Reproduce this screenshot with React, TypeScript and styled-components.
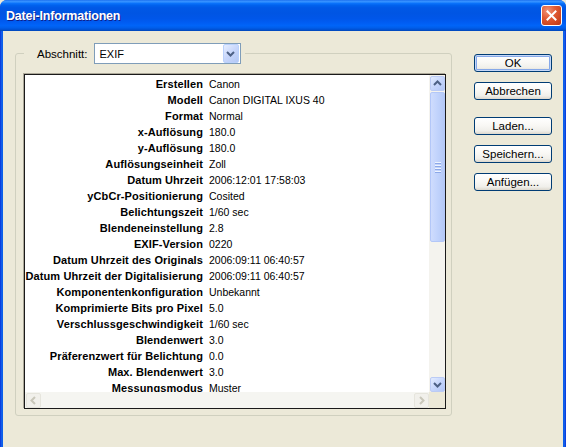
import React from 'react';
import styled, { createGlobalStyle } from 'styled-components';

const GlobalStyle = createGlobalStyle`
  html, body {
    margin: 0;
    padding: 0;
    background: #ECE9D8;
  }
  body {
    font-family: "Liberation Sans", Arial, sans-serif;
    font-size: 11px;
    color: #000;
  }
`;

const Window = styled.div`
  width: 566px;
  height: 447px;
  display: flex;
  flex-direction: column;
  background: linear-gradient(90deg, #0831D9 0px, #166AEE 2px, #0055E5 3px, #0055E5 563px, #166AEE 564px, #0831D9 566px);
  border-radius: 7px 7px 0 0;
  overflow: hidden;
`;

const TitleBar = styled.div`
  height: 31px;
  flex: none;
  display: flex;
  align-items: center;
  justify-content: space-between;
  padding: 0 4px 0 6px;
  background: linear-gradient(180deg, #0A5FE8 0%, #3D95FF 3%, #2A8BFF 7%, #0A72FA 11%, #0062EE 17%, #0058E6 25%, #0055E3 42%, #0056E9 60%, #005CF2 72%, #0064F8 82%, #0060EE 88%, #0055DC 94%, #0046B8 100%);
`;

const Title = styled.span`
  color: #fff;
  font-family: "Liberation Sans", Arial, sans-serif;
  font-weight: bold;
  font-size: 12.5px;
  letter-spacing: -0.2px;
  text-shadow: 1px 1px #0f1f8a;
  margin-top: 1px;
`;

const CloseButton = styled.div`
  width: 21px;
  height: 21px;
  box-sizing: border-box;
  border: 1px solid #fff;
  border-radius: 3px;
  background: radial-gradient(circle at 30% 25%, #F0957A 0%, #E15B34 40%, #CC4520 75%, #B5361A 100%);
  display: flex;
  align-items: center;
  justify-content: center;
`;

const Body = styled.div`
  flex: 1;
  margin: 0 3px;
  background: #ECE9D8;
  display: flex;
  align-items: flex-start;
  padding: 12px 0 0 12px;
`;

const Group = styled.fieldset`
  margin: 0;
  width: 437px;
  box-sizing: border-box;
  border: 1px solid #D0D0BF;
  border-radius: 3px;
  padding: 10px 5px 6px 8px;
`;

const Legend = styled.legend`
  padding: 0 4px 0 13px;
  display: flex;
  align-items: center;
  gap: 6px;
`;

const FieldLabel = styled.span`
  font-size: 11.5px;
`;

const Combo = styled.div`
  width: 147px;
  height: 21px;
  box-sizing: border-box;
  border: 1px solid #7F9DB9;
  background: #fff;
  display: flex;
  align-items: center;
  padding-left: 5px;
  font-size: 11px;
`;

const ComboButton = styled.div`
  margin-left: auto;
  margin-right: 1px;
  width: 16px;
  height: 19px;
  box-sizing: border-box;
  border: 1px solid #BAD1FC;
  border-radius: 2px;
  background: linear-gradient(135deg, #E6EEFF 0%, #C7D6FB 50%, #B3C8F5 100%);
  display: flex;
  align-items: center;
  justify-content: center;
`;

const ListBox = styled.div`
  width: 422px;
  height: 335px;
  box-sizing: border-box;
  border: 1px solid #1A1A1A;
  box-shadow: -1px -1px 0 #ACA899;
  background: #fff;
  display: grid;
  grid-template-columns: 1fr 16px;
  grid-template-rows: 1fr 16px;
`;

const Rows = styled.div`
  overflow: hidden;
  padding-top: 1px;
`;

const Row = styled.div`
  display: grid;
  grid-template-columns: 178px 1fr;
  column-gap: 6px;
  height: 16px;
  align-items: center;
  white-space: nowrap;
`;

const Key = styled.span`
  font-weight: bold;
  text-align: right;
  direction: rtl;
  letter-spacing: 0.1px;
`;

const Value = styled.span`
  font-weight: normal;
  font-size: 10.5px;
`;

const VScroll = styled.div`
  display: flex;
  flex-direction: column;
  background: #F4F3EE;
  padding: 1px 0 0 1px;
`;

const HScroll = styled.div`
  display: flex;
  align-items: stretch;
  background: #F5F5F1;
  padding: 1px 0 0 1px;
`;

const Corner = styled.div`
  background: #ECE9D8;
`;

const ScrollButton = styled.div<{ $disabled?: boolean }>`
  width: 15px;
  height: 15px;
  flex: none;
  box-sizing: border-box;
  border: 1px solid ${p => (p.$disabled ? '#E6E5DD' : '#BBCBF5')};
  border-radius: 2px;
  background: ${p =>
    p.$disabled
      ? '#F1F0EB'
      : 'linear-gradient(135deg, #E3ECFF 0%, #C6D6FC 50%, #B2C6F6 100%)'};
  display: flex;
  align-items: center;
  justify-content: center;
`;

const Thumb = styled.div`
  width: 15px;
  height: 150px;
  margin-top: 1px;
  box-sizing: border-box;
  border: 1px solid #B3C7F8;
  border-radius: 2px;
  background: linear-gradient(90deg, #CFDCFD 0%, #C1D3FC 50%, #B5C9F7 100%);
  display: flex;
  flex-direction: column;
  align-items: center;
  justify-content: center;
  gap: 1px;
`;

const Grip = styled.div`
  width: 6px;
  height: 1px;
  background: #EEF4FE;
  box-shadow: 0 1px #8CA8E8;
  margin-bottom: 1px;
`;

const Track = styled.div`
  flex: 1;
`;

const ButtonColumn = styled.div`
  display: flex;
  flex-direction: column;
  margin-left: 22px;
  margin-top: 11px;
  width: 78px;
`;

const PushButton = styled.div<{ $default?: boolean; $gap?: number }>`
  height: 18px;
  margin-top: ${p => p.$gap ?? 0}px;
  box-sizing: border-box;
  border: 1px solid #003C74;
  border-radius: 3px;
  background: linear-gradient(180deg, #FFFFFF 0%, #F9F8F5 45%, #F0EFEA 80%, #DCD7CD 100%);
  box-shadow: ${p => (p.$default ? 'inset 0 0 0 1px #C6D8F8, inset 0 0 0 2px #86A8E8' : 'none')};
  display: flex;
  align-items: center;
  justify-content: center;
  font-size: 11.5px;
  color: #000;
`;

const Chevron: React.FC<{ dir: 'up' | 'down' | 'left' | 'right'; color: string }> = ({ dir, color }) => {
  const rot = { up: 0, right: 90, down: 180, left: 270 }[dir];
  return (
    <svg width="9" height="9" viewBox="0 0 9 9" style={{ transform: `rotate(${rot}deg)` }}>
      <polyline points="1,6 4.5,2.5 8,6" fill="none" stroke={color} strokeWidth="2" />
    </svg>
  );
};

const rows: [string, string][] = [
  ['Erstellen', 'Canon'],
  ['Modell', 'Canon DIGITAL IXUS 40'],
  ['Format', 'Normal'],
  ['x-Auflösung', '180.0'],
  ['y-Auflösung', '180.0'],
  ['Auflösungseinheit', 'Zoll'],
  ['Datum Uhrzeit', '2006:12:01 17:58:03'],
  ['yCbCr-Positionierung', 'Cosited'],
  ['Belichtungszeit', '1/60 sec'],
  ['Blendeneinstellung', '2.8'],
  ['EXIF-Version', '0220'],
  ['Datum Uhrzeit des Originals', '2006:09:11 06:40:57'],
  ['Datum Uhrzeit der Digitalisierung', '2006:09:11 06:40:57'],
  ['Komponentenkonfiguration', 'Unbekannt'],
  ['Komprimierte Bits pro Pixel', '5.0'],
  ['Verschlussgeschwindigkeit', '1/60 sec'],
  ['Blendenwert', '3.0'],
  ['Präferenzwert für Belichtung', '0.0'],
  ['Max. Blendenwert', '3.0'],
  ['Messungsmodus', 'Muster'],
];

const App: React.FC = () => {
  return (
    <>
      <GlobalStyle />
      <Window>
        <TitleBar>
          <Title>Datei-Informationen</Title>
          <CloseButton>
            <svg width="11" height="11" viewBox="0 0 11 11">
              <path d="M1.5 1.5 L9.5 9.5 M9.5 1.5 L1.5 9.5" stroke="#fff" strokeWidth="2" strokeLinecap="square" />
            </svg>
          </CloseButton>
        </TitleBar>
        <Body>
          <Group>
            <Legend>
              <FieldLabel>Abschnitt:</FieldLabel>
              <Combo>
                EXIF
                <ComboButton>
                  <Chevron dir="down" color="#4D6185" />
                </ComboButton>
              </Combo>
            </Legend>
            <ListBox>
              <Rows>
                {rows.map(([k, v]) => (
                  <Row key={k}>
                    <Key>{k}</Key>
                    <Value>{v}</Value>
                  </Row>
                ))}
              </Rows>
              <VScroll>
                <ScrollButton>
                  <Chevron dir="up" color="#4D6185" />
                </ScrollButton>
                <Thumb>
                  <Grip />
                  <Grip />
                  <Grip />
                  <Grip />
                </Thumb>
                <Track />
                <ScrollButton>
                  <Chevron dir="down" color="#4D6185" />
                </ScrollButton>
              </VScroll>
              <HScroll>
                <ScrollButton $disabled>
                  <Chevron dir="left" color="#C9C7BA" />
                </ScrollButton>
                <Track />
                <ScrollButton $disabled>
                  <Chevron dir="right" color="#C9C7BA" />
                </ScrollButton>
              </HScroll>
              <Corner />
            </ListBox>
          </Group>
          <ButtonColumn>
            <PushButton $default>OK</PushButton>
            <PushButton $gap={10}>Abbrechen</PushButton>
            <PushButton $gap={17}>Laden...</PushButton>
            <PushButton $gap={10}>Speichern...</PushButton>
            <PushButton $gap={10}>Anfügen...</PushButton>
          </ButtonColumn>
        </Body>
      </Window>
    </>
  );
};

export default App;
